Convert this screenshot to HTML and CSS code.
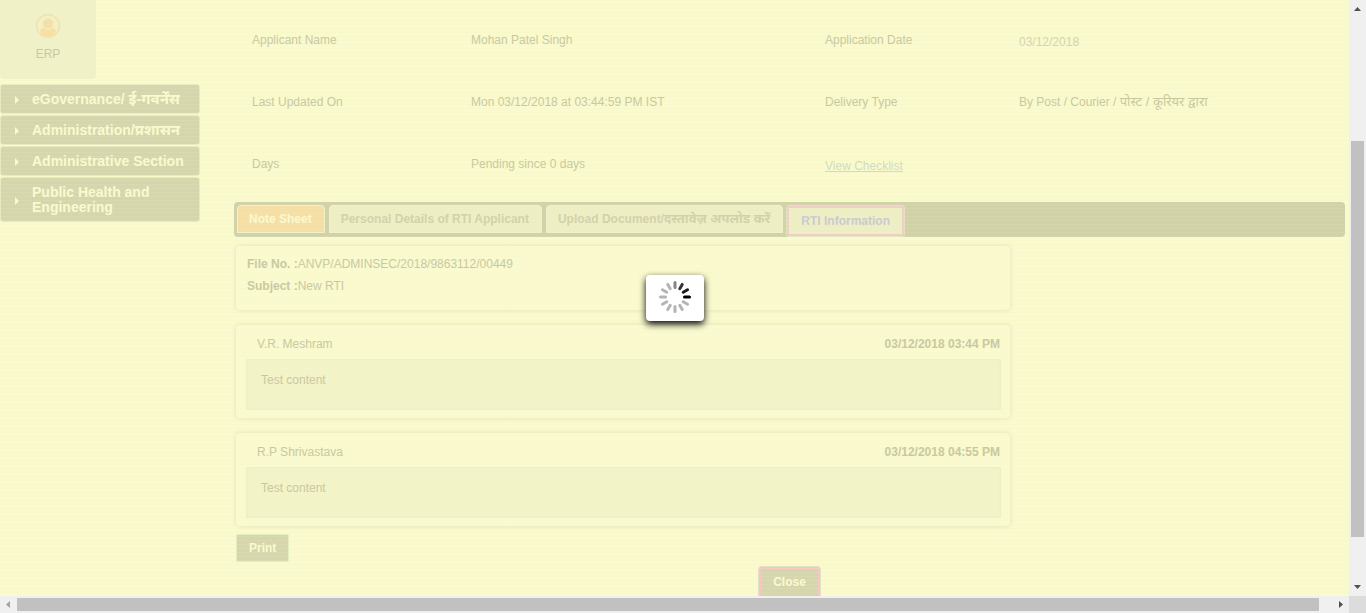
FILE: index.html
```html
<!DOCTYPE html>
<html lang="en">
<head>
<meta charset="utf-8">
<title>RTI Application</title>
<link rel="stylesheet" href="styles.css">
</head>
<body>
<div class="window">
  <div class="viewport">
    <aside class="sidebar">
      <a class="erp" href="#">
        <svg class="erp-icon" viewBox="0 0 24 24" aria-hidden="true"><circle cx="12" cy="12" r="11.3" fill="none" stroke="#f5dfa6" stroke-width="1.4"/><path d="M4 18C4.300 15 6 13.500 8 13.500H16C18 13.500 19.700 15 20 18Q17 23 12 23T4 18Z" fill="#f5dfa6"/><circle cx="12" cy="9.600" r="5.700" fill="#f5dfa6" stroke="#f0f0c9" stroke-width="1.200"/></svg>
        <span>ERP</span>
      </a>
      <nav class="menu">
        <a class="menu-item" href="#">eGovernance/ <span class="hindi" lang="hi">ई-गवर्नेंस</span></a>
        <a class="menu-item" href="#">Administration/<span class="hindi" lang="hi">प्रशासन</span></a>
        <a class="menu-item" href="#">Administrative Section</a>
        <a class="menu-item" href="#">Public Health and Engineering</a>
      </nav>
    </aside>
    <main class="main">
      <dl class="details">
        <dt>Applicant Name</dt><dd>Mohan Patel Singh</dd><dt>Application Date</dt><dd class="date">03/12/2018</dd>
        <dt>Last Updated On</dt><dd>Mon 03/12/2018 at 03:44:59 PM IST</dd><dt>Delivery Type</dt><dd>By Post / Courier / <span class="hindi-small" lang="hi">पोस्ट / कूरियर द्वारा</span></dd>
        <dt>Days</dt><dd>Pending since 0 days</dd><dt class="checklist"><a href="#">View Checklist</a></dt><dd></dd>
      </dl>
      <div class="tabs">
        <button class="tab tab-active" type="button">Note Sheet</button>
        <button class="tab" type="button">Personal Details of RTI Applicant</button>
        <button class="tab" type="button">Upload Document/<span class="hindi-small" lang="hi">दस्तावेज़ अपलोड करें</span></button>
        <button class="tab tab-focus" type="button">RTI Information</button>
      </div>
      <div class="notes">
        <section class="card file">
          <p><b>File No. :</b>ANVP/ADMINSEC/2018/9863112/00449</p>
          <p><b>Subject :</b>New RTI</p>
        </section>
        <article class="card note">
          <header class="note-head"><span>V.R. Meshram</span><b>03/12/2018 03:44 PM</b></header>
          <div class="note-body">Test content</div>
        </article>
        <article class="card note">
          <header class="note-head"><span>R.P Shrivastava</span><b>03/12/2018 04:55 PM</b></header>
          <div class="note-body">Test content</div>
        </article>
        <button class="button print" type="button">Print</button>
      </div>
      <div class="actions"><button class="button close" type="button">Close</button></div>
    </main>
    <div class="overlay">
      <div class="loader" role="status" aria-label="Loading">
        <svg class="spinner" viewBox="-16 -16 32 32" stroke-width="3" stroke-linecap="round" stroke="#b4b4b4">
          <path d="M9.500 0H14.500" stroke="#000"/>
          <path d="M9.500 0H14.500" transform="rotate(30)"/>
          <path d="M9.500 0H14.500" transform="rotate(60)"/>
          <path d="M9.500 0H14.500" transform="rotate(90)"/>
          <path d="M9.500 0H14.500" transform="rotate(120)"/>
          <path d="M9.500 0H14.500" transform="rotate(150)"/>
          <path d="M9.500 0H14.500" transform="rotate(180)"/>
          <path d="M9.500 0H14.500" transform="rotate(210)"/>
          <path d="M9.500 0H14.500" transform="rotate(240)"/>
          <path d="M9.500 0H14.500" transform="rotate(270)" stroke="#858585"/>
          <path d="M9.500 0H14.500" transform="rotate(300)" stroke="#353535"/>
          <path d="M9.500 0H14.500" transform="rotate(330)" stroke="#1c1c1c"/>
        </svg>
      </div>
    </div>
  </div>
  <div class="scroll-y" aria-hidden="true">
    <svg class="arrow" viewBox="0 0 17 17"><path d="M5 11h7L8.500 7z" fill="#505050"/></svg>
    <div class="track-y"><div class="thumb-y"></div></div>
    <svg class="arrow" viewBox="0 0 17 17"><path d="M5 6h7L8.500 10z" fill="#505050"/></svg>
  </div>
  <div class="scroll-x" aria-hidden="true">
    <svg class="arrow" viewBox="0 0 17 17"><path d="M10 5v7L6 8.500z" fill="#a3a3a3"/></svg>
    <div class="track-x"><div class="thumb-x"></div></div>
    <svg class="arrow" viewBox="0 0 17 17"><path d="M7 5v7l4-3.500z" fill="#505050"/></svg>
  </div>
  <div class="corner"></div>
</div>
</body>
</html>
```
FILE: styles.css
```css
* { box-sizing: border-box; }
body {
  margin: 0;
  font: 12px/15px "Liberation Sans", "Noto Sans", sans-serif;
  color: #c8c8a0;
}
a { color: inherit; text-decoration: none; }
button { font: inherit; color: inherit; margin: 0; }
p, dl, dd { margin: 0; }
.hindi { font-size: 15px; line-height: 0; }
.hindi-small { font-size: 13px; line-height: 0; }
.window {
  display: grid;
  grid-template: minmax(0, 1fr) 17px / minmax(0, 1fr) 17px;
  height: 100vh;
}
.viewport {
  position: relative;
  display: flex;
  align-items: flex-start;
  overflow: hidden;
  background: repeating-linear-gradient(#f9f9c9 0 1px, #f9f9d2 1px 4px);
}
.sidebar { width: 200px; flex: none; }
.erp {
  display: flex;
  flex-direction: column;
  align-items: center;
  gap: 9px;
  width: 96px;
  padding: 14px 0 17px;
  background: #f0f0c9;
  border-radius: 0 0 4px 4px;
}
.erp-icon { width: 24px; height: 24px; }
.menu { display: grid; gap: 1px; padding-top: 5px; }
.menu-item {
  display: block;
  position: relative;
  padding: 7px 12px 6px 31px;
  border: 1px solid #e9e9c2;
  border-radius: 3px;
  background: #d6d6ae;
  color: #fafad0;
  font-size: 14px;
  font-weight: bold;
}
.menu-item::before {
  content: "";
  position: absolute;
  left: 14px;
  top: 50%;
  border: 4px solid transparent;
  border-left-color: #fafad0;
  border-right: 0;
  margin-top: -3px;
}
.main { flex: 1; min-width: 0; padding: 0 4px 0 34px; }
.details {
  display: grid;
  grid-template-columns: 219fr 354fr 194fr 326fr;
  grid-auto-rows: 62px;
  padding: 9px 0 7px 18px;
  line-height: 62px;
}
.details .date, .details .checklist { padding-top: 2px; }
.date { color: #d3d3b0; }
.checklist a { color: #cddcc4; text-decoration: underline; }
.tabs {
  display: flex;
  align-items: flex-start;
  gap: 4px;
  height: 35px;
  padding: 3px;
  background: #d1d1aa;
  border-radius: 4px;
}
.tab {
  height: 28px;
  padding: 0 12px 0 11px;
  border: 1px solid #f1f1ca;
  border-radius: 4px 4px 0 0;
  background: #eeeec6;
  color: #d1d1aa;
  font-weight: bold;
  white-space: nowrap;
}
.tab-active { background: #f5dfa6; color: #fafad0; }
.tab-focus {
  height: 30px;
  margin-top: 1px;
  padding: 0 12px;
  border: 2px solid #efcdc9;
  border-radius: 2px;
  outline: 1px solid #e2e2be;
  color: #c9c9d0;
}
.notes { width: 776px; padding: 9px 0 0 2px; }
.card {
  margin-bottom: 15px;
  border-radius: 4px;
  background: #fafad155;
  box-shadow: 0 0 5px #dfdfb9;
}
.file { height: 64px; padding: 7px 11px; line-height: 22px; }
.note { padding: 12px 9px 8px 10px; }
.note-head {
  display: flex;
  justify-content: space-between;
  padding: 0 1px 7px 11px;
}
.note-body {
  height: 51px;
  padding: 14px 15px;
  background: #f3f3ca;
  border-radius: 2px;
  box-shadow: inset 0 0 3px #e8e8c0;
}
.button {
  height: 28px;
  padding: 0 12px;
  border: 1px solid #e4eec0;
  border-radius: 2px;
  background: #d6d6ae;
  color: #fafad0;
  font-weight: bold;
}
.print { display: block; margin-top: -7px; }
.actions { display: flex; justify-content: center; padding-top: 5px; }
.close {
  height: 31px;
  padding: 0 12px;
  border: 2px solid #fac3cb;
  outline: 1px solid #e2e2be;
}
.overlay {
  position: absolute;
  inset: 0;
  display: grid;
  place-items: center;
  background: repeating-linear-gradient(#f8f8b81a 0 1px, #f8f8b800 1px 4px);
}
.loader {
  width: 58px;
  height: 46px;
  padding: 6px 13px;
  border-radius: 4px;
  background: #fff;
  box-shadow: 0 3px 7px #000;
}
.spinner { display: block; width: 32px; height: 32px; }
.scroll-y { display: flex; flex-direction: column; background: #f0f0f0; }
.track-y { flex: 1; padding: 0 2px; }
.thumb-y { height: 396px; margin: 124px auto 0; background: #c1c1c1; }
.scroll-x { display: flex; background: #f0f0f0; }
.track-x { flex: 1; padding: 2px 0; }
.thumb-x { width: 99%; height: 13px; background: #c1c1c1; }
.arrow { flex: none; width: 17px; height: 17px; }
.corner { background: #dcdcdc; }
```
